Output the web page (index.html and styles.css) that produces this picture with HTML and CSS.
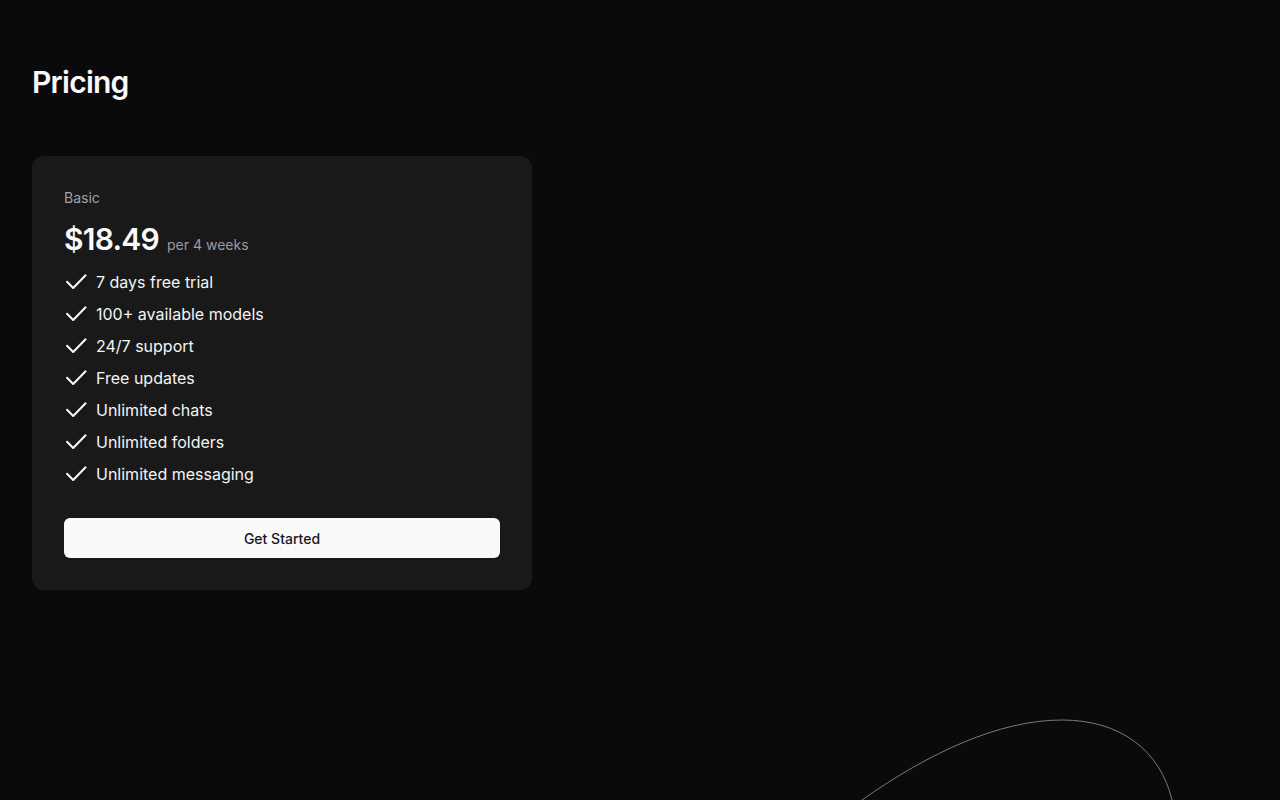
FILE: index.html
```html
<!DOCTYPE html>
<html lang="en">
<head>
<meta charset="utf-8">
<title>Pricing</title>
<link rel="stylesheet" href="styles.css">
</head>
<body>
<main class="page">
  <h1 class="title">Pricing</h1>
  <section class="card">
    <div class="plan">Basic</div>
    <div class="price-row">
      <span class="price">$18.49</span>
      <span class="period">per 4 weeks</span>
    </div>
    <ul class="features">
      <li><svg class="check" viewBox="0 0 24 24"><path d="M3 11.8 9.2 18 21.6 5.2"/></svg><span>7 days free trial</span></li>
      <li><svg class="check" viewBox="0 0 24 24"><path d="M3 11.8 9.2 18 21.6 5.2"/></svg><span>100+ available models</span></li>
      <li><svg class="check" viewBox="0 0 24 24"><path d="M3 11.8 9.2 18 21.6 5.2"/></svg><span>24/7 support</span></li>
      <li><svg class="check" viewBox="0 0 24 24"><path d="M3 11.8 9.2 18 21.6 5.2"/></svg><span>Free updates</span></li>
      <li><svg class="check" viewBox="0 0 24 24"><path d="M3 11.8 9.2 18 21.6 5.2"/></svg><span>Unlimited chats</span></li>
      <li><svg class="check" viewBox="0 0 24 24"><path d="M3 11.8 9.2 18 21.6 5.2"/></svg><span>Unlimited folders</span></li>
      <li><svg class="check" viewBox="0 0 24 24"><path d="M3 11.8 9.2 18 21.6 5.2"/></svg><span>Unlimited messaging</span></li>
    </ul>
    <button class="cta" type="button">Get Started</button>
  </section>
</main>
<svg class="deco" viewBox="0 0 1280 800" preserveAspectRatio="none" aria-hidden="true">
  <path d="M 862 800 C 930 752, 1000 720, 1062 720 C 1120 720, 1160 750, 1172 800"/>
</svg>
</body>
</html>
```

FILE: styles.css
```css
* { box-sizing: border-box; }
html, body {
  margin: 0;
  padding: 0;
  height: 100%;
  background: #0a0a0c;
  overflow: hidden;
}
body {
  font-family: Inter, "Noto Sans", "Liberation Sans", sans-serif;
  color: #fafafa;
  position: relative;
}
.page {
  padding: 64px 32px 0;
  display: flex;
  flex-direction: column;
  align-items: flex-start;
}
.title {
  margin: 0;
  font-size: 30px;
  line-height: 36px;
  font-weight: 600;
  letter-spacing: -0.75px;
}
.card {
  margin-top: 56px;
  width: 500px;
  background: #19191a;
  border-radius: 12px;
  padding: 32px;
  display: flex;
  flex-direction: column;
}
.plan {
  font-size: 14px;
  line-height: 20px;
  color: #a1a1a6;
}
.price-row {
  margin-top: 11px;
  display: flex;
  align-items: baseline;
  gap: 8px;
  height: 40px;
}
.price {
  font-size: 30px;
  line-height: 40px;
  font-weight: 600;
  letter-spacing: -0.75px;
}
.period {
  font-size: 14px;
  color: #9a9aa0;
}
.features {
  list-style: none;
  margin: 11px 0 0;
  padding: 0;
  display: flex;
  flex-direction: column;
  gap: 8px;
}
.features li {
  display: flex;
  align-items: center;
  gap: 8px;
  font-size: 16px;
  line-height: 24px;
  color: #f4f4f5;
}
.check {
  width: 24px;
  height: 24px;
  flex: none;
  fill: none;
  stroke: #fafafa;
  stroke-width: 2;
  stroke-linecap: round;
  stroke-linejoin: round;
}
.cta {
  margin-top: 32px;
  height: 40px;
  width: 100%;
  border: 0;
  border-radius: 6px;
  background: #fafafa;
  color: #18181b;
  font-family: inherit;
  font-size: 14px;
  font-weight: 500;
  cursor: pointer;
}
.deco {
  position: absolute;
  left: 0;
  top: 0;
  width: 1280px;
  height: 800px;
  pointer-events: none;
}
.deco path {
  fill: none;
  stroke: #7a7a7e;
  stroke-width: 1;
}
```
